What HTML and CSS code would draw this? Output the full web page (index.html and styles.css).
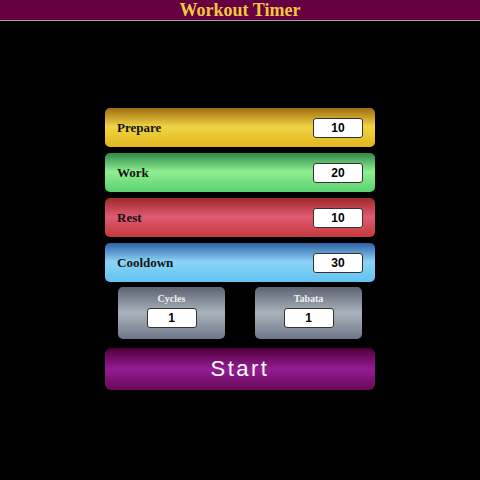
FILE: index.html
```html
<!DOCTYPE html>
<html>
<head>
<meta charset="utf-8">
<link rel="stylesheet" href="styles.css">
</head>
<body>
<header class="topbar"><h1 class="title">Workout Timer</h1></header>
<main class="panel">
  <div class="row prepare"><span class="label">Prepare</span><input class="num" value="10"></div>
  <div class="row work"><span class="label">Work</span><input class="num" value="20"></div>
  <div class="row rest"><span class="label">Rest</span><input class="num" value="10"></div>
  <div class="row cooldown"><span class="label">Cooldown</span><input class="num" value="30"></div>
  <div class="pair">
    <div class="box"><span class="small-label">Cycles</span><input class="num" value="1"></div>
    <div class="box"><span class="small-label">Tabata</span><input class="num" value="1"></div>
  </div>
  <button class="start">Start</button>
</main>
</body>
</html>
```
FILE: styles.css
```css
html, body { margin: 0; padding: 0; background: #000; }
body { width: 480px; height: 480px; overflow: hidden; }
.topbar {
  height: 20px;
  background: #660040;
  border-bottom: 1px solid #a0a0a0;
  display: flex;
  align-items: center;
  justify-content: center;
}
.title {
  margin: 0;
  font-family: "Liberation Serif", serif;
  font-weight: bold;
  font-size: 18px;
  line-height: 20px;
  color: #f0c840;
}
.panel {
  width: 270px;
  margin: 87px auto 0;
  display: flex;
  flex-direction: column;
}
.row {
  height: 39px;
  box-sizing: border-box;
  border-radius: 5px;
  display: flex;
  align-items: center;
  justify-content: space-between;
  padding: 0 12px;
  margin-bottom: 6px;
}
.label {
  font-family: "Liberation Serif", serif;
  font-weight: bold;
  font-size: 13px;
  color: #111;
}
.num {
  width: 50px;
  height: 20px;
  box-sizing: border-box;
  border: 1px solid #333;
  border-radius: 3px;
  background: #fff;
  text-align: center;
  font-family: "Liberation Sans", sans-serif;
  font-weight: bold;
  font-size: 12px;
  color: #000;
  padding: 0;
  outline: none;
}
.prepare { background: linear-gradient(#a06c10 0%, #f0d444 48%, #e2b61c 100%); }
.work { background: linear-gradient(#2e8a48 0%, #90ee90 48%, #5ad070 100%); }
.rest { background: linear-gradient(#9c2a28 0%, #e05a72 48%, #c43a3c 100%); }
.cooldown { background: linear-gradient(#2f62a6 0%, #8ad4f6 48%, #62c2f0 100%); }
.pair {
  display: flex;
  justify-content: space-between;
  padding: 0 13px;
  margin-top: -1px;
}
.box {
  width: 107px;
  height: 52px;
  box-sizing: border-box;
  border-radius: 5px;
  background: linear-gradient(#5e6272 0%, #a8b4bc 50%, #6e7688 100%);
  display: flex;
  flex-direction: column;
  align-items: center;
  padding-top: 5px;
  gap: 3px;
}
.small-label {
  font-family: "Liberation Serif", serif;
  font-weight: bold;
  font-size: 10px;
  line-height: 13px;
  color: #f0f0f0;
}
.start {
  margin-top: 9px;
  height: 42px;
  border: none;
  border-radius: 6px;
  background: linear-gradient(#4e0036 0%, #941c94 50%, #680858 100%);
  color: #fff;
  font-family: "Liberation Sans", sans-serif;
  font-size: 22px;
  letter-spacing: 2.5px;
  padding: 0;
}
```
